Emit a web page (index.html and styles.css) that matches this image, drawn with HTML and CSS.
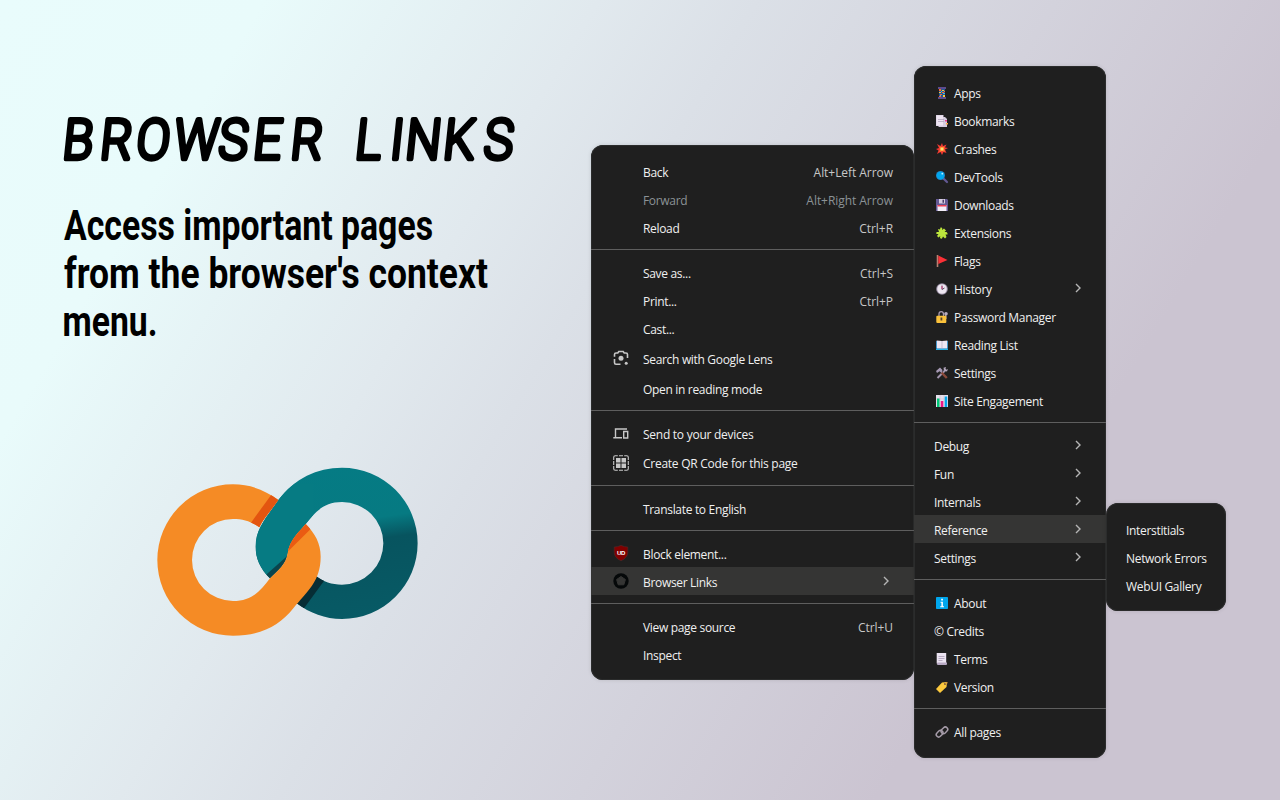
FILE: index.html
```html
<!DOCTYPE html>
<html lang="en">
<head>
<meta charset="utf-8">
<title>Browser Links</title>
<link rel="stylesheet" href="styles.css">
</head>
<body>
<main class="promo">
  <section class="intro">
    <svg class="title" width="470" height="70" viewBox="0 0 470 70" role="img" aria-label="Browser Links">
      <text class="title-text" transform="translate(6 0) skewX(-6) scale(.89 1)" y="57" x="-3 39 79.500 121.500 172 211 253 290 325.500 365 382 424.500 470">BROWSER LINKS</text>
    </svg>
    <svg class="tagline" width="470" height="150" viewBox="0 0 470 150">
      <text x="0" y="40" textLength="369" lengthAdjust="spacingAndGlyphs">Access important pages</text>
      <text x="0" y="88" textLength="424" lengthAdjust="spacingAndGlyphs">from the browser's context</text>
      <text x="-1.5" y="136" textLength="95" lengthAdjust="spacingAndGlyphs">menu.</text>
    </svg>
    <svg class="logo" width="300" height="200" viewBox="0 0 900 600">
      <defs>
        <linearGradient id="teal" x1="0.35" y1="0" x2="0.5" y2="1">
          <stop offset="0" stop-color="#057b84"/><stop offset=".38" stop-color="#067a82"/><stop offset=".52" stop-color="#07545f"/><stop offset="1" stop-color="#075a65"/>
        </linearGradient>
        <clipPath id="tealClip"><path id="tealShape" d="M415 150C465 85 530 53 606 53A227 227 0 0 1 606 507C555 507 510 490 470 460L528 378C550 395 575 404 606 404A124 124 0 0 0 606 156C545 156 520 195 497 222C480 243 448 270 443 310C437 345 415 360 390 385C360 355 347 325 347 290C347 235 378 205 415 150Z"/></clipPath>
        <clipPath id="orangeClip"><path id="orangeShape" d="M415 150C375 120 330 103 279 103A227 227 0 0 0 279 557C365 557 420 525 460 475C500 425 542 395 542 320C542 280 525 250 497 222C480 243 448 270 443 310C437 345 415 360 390 385C360 425 335 453 279 453A123 123 0 0 1 279 207C310 207 335 215 358 232C370 205 395 180 415 150Z"/></clipPath>
      </defs>
      <use href="#tealShape" fill="url(#teal)"/>
      <g clip-path="url(#tealClip)">
        <path d="M340 100h180v300H340z" fill="#067b83"/>
        <path d="M380 373L445 315V400H390z" fill="#0a444d"/>
        <path d="M525 370L554 390L492 475L460 465z" fill="#062d35"/>
      </g>
      <use href="#orangeShape" fill="#f58b25"/>
      <g clip-path="url(#orangeClip)">
        <path d="M394 134L333 218L360 240L425 150z" fill="#e35510"/>
        <path d="M497 215L512 237L440 308V270z" fill="#ea5b12"/>
      </g>
    </svg>
  </section>

  <nav class="menu menu-main">
    <div class="row"><span>Back</span><kbd>Alt+Left Arrow</kbd></div>
    <div class="row disabled"><span>Forward</span><kbd>Alt+Right Arrow</kbd></div>
    <div class="row"><span>Reload</span><kbd>Ctrl+R</kbd></div>
    <hr>
    <div class="row"><span>Save as...</span><kbd>Ctrl+S</kbd></div>
    <div class="row"><span>Print...</span><kbd>Ctrl+P</kbd></div>
    <div class="row"><span>Cast...</span></div>
    <div class="row lens">
      <svg class="side" viewBox="0 0 16 16"><path d="M1.500 6.800V4.500Q1.500 3 3 3H4.800L5.800 1.500H10.200L11.200 3H13Q14.500 3 14.500 4.500V8M1.500 9V12.800Q1.500 14.300 3 14.300H7.500" fill="none" stroke="#c7c7c7" stroke-width="1.600"/><circle cx="8" cy="8.300" r="2.500" fill="#c7c7c7"/><circle cx="13.200" cy="13.300" r="1.500" fill="#c7c7c7"/></svg>
      <span>Search with Google Lens</span></div>
    <div class="row"><span>Open in reading mode</span></div>
    <hr>
    <div class="row tall">
      <svg class="side" viewBox="0 0 16 16"><path d="M2.500 11V3H14M.3 11.800H9M10.700 5.500H14.700V12H10.700z" fill="none" stroke="#c7c7c7" stroke-width="1.400"/></svg>
      <span>Send to your devices</span></div>
    <div class="row tall">
      <svg class="side" viewBox="0 0 16 16"><path d="M.7 5V2.200Q.7.7 2.200.7H4.800M6 .7H10M11.200.7H13.800Q15.300.7 15.300 2.200V5M15.300 6V10M15.300 11V13.800Q15.300 15.300 13.800 15.300H11.200M10 15.300H6M4.800 15.300H2.200Q.7 15.300.7 13.800V11M.7 10V6" fill="none" stroke="#c7c7c7" stroke-width="1.100"/><path d="M3 3h4.500v4.500H3zM8.500 3H13v4.500H8.500zM3 8.500h4.500V13H3zM8.500 8.500H13V13H8.500z" fill="#c7c7c7"/></svg>
      <span>Create QR Code for this page</span></div>
    <hr>
    <div class="row"><span>Translate to English</span></div>
    <hr>
    <div class="row">
      <svg class="side" viewBox="0 0 16 16"><path d="M8 .3Q11 2 14.800 2V7.500Q14.500 13 8 15.800Q1.500 13 1.200 7.500V2Q5 2 8 .3Z" fill="#800000" stroke="#4c3030" stroke-width=".5"/><text class="shield" x="8" y="9.800">UD</text></svg>
      <span>Block element...</span></div>
    <div class="row active">
      <svg class="side" viewBox="0 0 16 16"><circle cx="8" cy="8" r="7.700" fill="#050809"/><path d="M8 3.500L12.400 6.500L10.800 11.800H5.200L3.600 6.500z" fill="#353534" stroke="#353534" stroke-linejoin="round"/></svg>
      <span>Browser Links</span>
      <svg class="chevron" viewBox="0 0 6 10"><path d="M1 1L5 5L1 9"/></svg></div>
    <hr>
    <div class="row"><span>View page source</span><kbd>Ctrl+U</kbd></div>
    <div class="row"><span>Inspect</span></div>
  </nav>

  <nav class="menu menu-pages">
    <div class="row"><svg class="emoji" viewBox="0 0 12 12"><path d="M2 0h8v2H2zM2 10h8v2H2z" fill="#5c4b8c"/><path d="M3 2h6v8H3z" fill="#245b91"/><path d="M3 2h2v2H3zM6 5h2v1H6zM4 7h2v1H4zM3 9h2v1H3zM8 4h1v1H8z" fill="#ff6430"/><path d="M6 3h2v1H6zM3 5h2v1H3zM7 8h2v2H7z" fill="#f8c944"/><path d="M5 4h1v1H5zM7 6h2v1H7zM4 8h1v1H4z" fill="#36b6ed"/></svg><span>Apps</span></div>
    <div class="row"><svg class="emoji" viewBox="0 0 12 12"><path d="M0 0h7.500v2H9l2 2v8H2.500v-1H0z" fill="#d6cce0"/><path d="M.5.5H7v10H.5z" fill="#eee5f2"/><path d="M2 4.500h6M2 6.500h6" stroke="#ad9fb9" stroke-width=".7"/><path d="M9 5h2v1.500H9z" fill="#e93b91"/><path d="M10 8h2v1.500h-2z" fill="#ffad42"/></svg><span>Bookmarks</span></div>
    <div class="row"><svg class="emoji" viewBox="0 0 12 12"><path d="M1 1L4.500 3L6 0L7 3L10.500 1.500L9 4.500L12 5L9 6.500L10.500 10L7.500 9L6 12L4.500 9L1 11L2.500 7.500L0 6L3 5z" fill="#f23732"/><path d="M3.500 3.500L6 4L8.500 3.500L8 6L9 8.500L6 8L3.500 9L4 6z" fill="#ff8b2e"/><circle cx="6" cy="6" r="1.500" fill="#ffe173"/></svg><span>Crashes</span></div>
    <div class="row"><svg class="emoji" viewBox="0 0 12 12"><path d="M7.500 7.500L11 11" stroke="#635994" stroke-width="2.200" stroke-linecap="round"/><circle cx="4.500" cy="4.500" r="4.500" fill="#2383c4"/><circle cx="4.500" cy="4.500" r="3.700" fill="#00a6ed"/><circle cx="6.300" cy="2.700" r=".9" fill="#bdeeff"/></svg><span>DevTools</span></div>
    <div class="row"><svg class="emoji" viewBox="0 0 12 12"><path d="M0 0h11l1 1v11H0z" fill="#635994"/><path d="M3 0h6v4.500H3z" fill="#d5cce1"/><path d="M6.500.7H8v3H6.500z" fill="#493b66"/><path d="M1.500 6h9v6h-9z" fill="#f3eef8"/><path d="M1.500 6h9v1.500h-9z" fill="#f04056"/></svg><span>Downloads</span></div>
    <div class="row"><svg class="emoji" viewBox="0 0 12 12"><path d="M2 2L4 2.500L4.500.5Q6 0 6.300 1.500L6 3L8 1.500L10 3.500L8.500 5L10.500 5Q12 6 11.500 7.500L9.500 7.500L10.500 10L9 11.500L7 9.500L6 11.500Q4 12 4 10.500L4.300 9L2.500 10.500L1 9L2.500 7L.5 7Q-.5 5.500 1 5L3 5z" fill="#bce53c"/></svg><span>Extensions</span></div>
    <div class="row"><svg class="emoji" viewBox="0 0 12 12"><path d="M.7 0h1.600v12H.7z" fill="#b98172"/><path d="M2.300.5L11.500 5L2.300 9z" fill="#fb3036"/></svg><span>Flags</span></div>
    <div class="row"><svg class="emoji" viewBox="0 0 12 12"><circle cx="6" cy="6" r="5.800" fill="#998ea4"/><circle cx="6" cy="6" r="4.800" fill="#eee7f1"/><path d="M6 2.500V6.500L8.500 5" fill="none" stroke="#55495f"/><path d="M6 3v3" stroke="#e5367f" stroke-width=".8"/></svg><span>History</span><svg class="chevron" viewBox="0 0 6 10"><path d="M1 1L5 5L1 9"/></svg></div>
    <div class="row"><svg class="emoji" viewBox="0 0 12 12"><path d="M3 5V3Q3 .7 5.200.7T7.500 3V5" fill="none" stroke="#a99bb0" stroke-width="1.300"/><circle cx="10" cy="2.700" r="1.800" fill="#b9adbf"/><path d="M9 4h1.500v4H9z" fill="#a99bb0"/><rect x=".3" y="4.700" width="10" height="7.300" rx="1" fill="#fbc23b"/><path d="M4.500 6.500h1.800v3H4.500z" fill="#59452f"/></svg><span>Password Manager</span></div>
    <div class="row"><svg class="emoji" viewBox="0 0 12 12"><path d="M0 2h12v9H0z" fill="#0074ba"/><path d="M.7 1.500L6 2L11.300 1.500V9.500H.7z" fill="#eee6f4"/><path d="M6 2v7.500" stroke="#b6a9c2" stroke-width=".7"/><path d="M0 10h12v1H0z" fill="#29b4e8"/></svg><span>Reading List</span></div>
    <div class="row"><svg class="emoji" viewBox="0 0 12 12"><path d="M1.500 11L9 3.500" stroke="#a093ac" stroke-width="2"/><path d="M7.500.8L8 3.800L11 4.500L12 2L10.500 2.700L9.500 1.700L10 0z" fill="#b3a6bc"/><path d="M5.500 5.500L10.800 11" stroke="#8b4a3b" stroke-width="2.500"/><path d="M0 4L4 .5L6.500 3L5.500 6L3.500 4.300L1 6z" fill="#a497b2"/></svg><span>Settings</span></div>
    <div class="row"><svg class="emoji" viewBox="0 0 12 12"><path d="M0 0h12v12H0z" fill="#e6dfeb"/><path d="M4 0v12M8 0v12M0 4h12" stroke="#bbafc7" stroke-width=".4"/><path d="M1 3.500h2.500V12H1z" fill="#00c776"/><path d="M4.800 6h2.500v6H4.800z" fill="#ee1685"/><path d="M8.700 1.500h2.500V12H8.700z" fill="#00a6ed"/></svg><span>Site Engagement</span></div>
    <hr>
    <div class="row"><span>Debug</span><svg class="chevron" viewBox="0 0 6 10"><path d="M1 1L5 5L1 9"/></svg></div>
    <div class="row"><span>Fun</span><svg class="chevron" viewBox="0 0 6 10"><path d="M1 1L5 5L1 9"/></svg></div>
    <div class="row"><span>Internals</span><svg class="chevron" viewBox="0 0 6 10"><path d="M1 1L5 5L1 9"/></svg></div>
    <div class="row active"><span>Reference</span><svg class="chevron" viewBox="0 0 6 10"><path d="M1 1L5 5L1 9"/></svg></div>
    <div class="row"><span>Settings</span><svg class="chevron" viewBox="0 0 6 10"><path d="M1 1L5 5L1 9"/></svg></div>
    <hr>
    <div class="row"><svg class="emoji" viewBox="0 0 12 12"><rect width="12" height="12" rx=".8" fill="#00a6ed"/><path d="M5.200 1.800h1.700v1.700H5.200zM4.500 4.700h2.400v4.500H8v1H4.200v-1h1.200V5.700h-.9z" fill="#fff"/></svg><span>About</span></div>
    <div class="row"><span>© Credits</span></div>
    <div class="row"><svg class="emoji" viewBox="0 0 12 12"><path d="M.7 0h9.500v10H.7z" fill="#ece4f2"/><path d="M2.500 3.500h6M2.500 5.500h6M2.500 7.500h4" stroke="#a99bb5" stroke-width=".8"/><path d="M2 9.500h9q.5 2.500-1 2.500H2q-1.500 0-1.300-2z" fill="#b8a9c3"/></svg><span>Terms</span></div>
    <div class="row"><svg class="emoji" viewBox="0 0 12 12"><path d="M6 1.500L11 1L10.500 6L4 12L0 8z" fill="#fcc93d"/><circle cx="9" cy="3" r="1" fill="#7c563c"/><path d="M9 3Q11 .5 12 2" fill="none" stroke="#d3883e" stroke-width=".8"/></svg><span>Version</span></div>
    <hr>
    <div class="row"><svg class="emoji" viewBox="0 0 12 12"><g fill="none" stroke="#a69ca9" stroke-width="1.500"><rect x="-.1" y="5.300" width="7.400" height="4.800" rx="2.400" transform="rotate(-45 3.600 7.700)"/><rect x="4.700" y="1.900" width="7.400" height="4.800" rx="2.400" transform="rotate(-45 8.400 4.300)"/></g></svg><span>All pages</span></div>
  </nav>

  <nav class="menu menu-sub">
    <div class="row"><span>Interstitials</span></div>
    <div class="row"><span>Network Errors</span></div>
    <div class="row"><span>WebUI Gallery</span></div>
  </nav>
</main>
</body>
</html>
```
FILE: styles.css
```css
* { box-sizing: border-box; }
body { margin: 0; }
.promo {
  width: 1280px;
  height: 800px;
  overflow: hidden;
  display: flex;
  align-items: flex-start;
  background: linear-gradient(121deg, #e9fcfc 0%, #e9fbfb 15%, #e1e9ee 34%, #dbe0e7 43%, #cbc4d1 77%, #cbc4d1 100%);
}
.intro {
  width: 591px;
  height: 800px;
  flex: none;
  display: flex;
  flex-direction: column;
  padding: 102px 0 0 64px;
}
.title, .tagline, .logo { display: block; flex: none; overflow: visible; }
.title-text {
  font: 300 56px Roboto, sans-serif;
  fill: #000;
  stroke: #000;
  stroke-width: 4.500px;
  stroke-linejoin: round;
}
.tagline { margin-top: 28px; font: 700 43px Roboto, sans-serif; }
.logo { margin: 100px 0 0 76px; }
.menu {
  flex: none;
  padding: 12px 0;
  border-radius: 12px;
  background: #1f1f1f;
  box-shadow: inset 0 0 0 1px #2b2c2c, 0 0 4px rgba(0, 0, 0, .12);
  color: #f0f0f0;
  font: 12px "Open Sans", "Noto Sans", sans-serif;
  letter-spacing: -.32px;
}
.menu-main { width: 323px; height: 535px; margin-top: 145px; }
.menu-pages { width: 192px; height: 692px; margin-top: 66px; }
.menu-sub { width: 120px; height: 108px; margin-top: 503px; }
.row { display: flex; align-items: center; height: 28px; padding: 0 20px; white-space: nowrap; }
.menu-main .row { padding: 0 21px 0 52px; }
.row span, .row kbd { padding-top: 2px; }
.row.tall { height: 29px; }
.row.tall span { padding-top: 1px; letter-spacing: -.26px; }
.row.lens { height: 32px; }
.row.active { background: #353534; }
.row kbd { margin-left: auto; font: inherit; letter-spacing: -.05px; color: #c7c7c7; }
.disabled, .row.disabled kbd { color: #8b9296; }
.side { width: 16px; height: 16px; margin: 0 14px 0 -30px; flex: none; }
.shield { font: 700 6px "Liberation Sans", sans-serif; letter-spacing: -.3px; fill: #fff; text-anchor: middle; }
.emoji { width: 12px; height: 12px; margin: 1px 6px 0 2px; flex: none; overflow: visible; }
.chevron { width: 6px; height: 10px; margin: 0 5px 0 auto; flex: none; fill: none; stroke: #b5b5b5; stroke-width: 1.400; }
.menu-main .chevron { margin-right: 4px; }
hr { height: 1px; margin: 8px 0; border: 0; background: #5e5e5e; }
```
